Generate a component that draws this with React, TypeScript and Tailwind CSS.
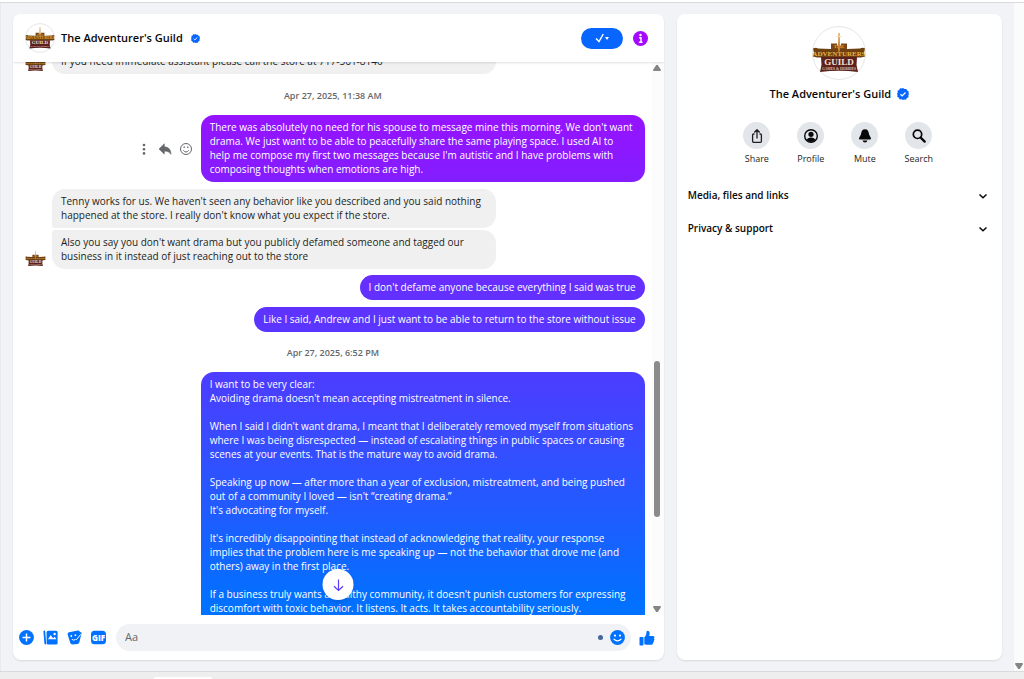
import type { ReactNode } from 'react';
import clsx from 'clsx';

function GuildLogo({ className }: { className?: string }) {
  return (
    <svg
      viewBox="0 0 54 54"
      className={clsx('shrink-0 overflow-visible', className)}
      role="img"
      aria-label="The Adventurer's Guild"
    >
      <path d="M19 17.500h6v2h4v-2h6v5.500H19z" fill="#7a4716" />
      <path d="M1 22.500q3-1.500 5 0l13 .5h16l13-.5q3-1.500 5 0l-1 4.500 1 3.500-4 1H5l-4-1L2 27z" fill="#6e4012" />
      <path d="M9 31h36l-.5 8 1.500 7q-19-2.500-38 0l1.500-7z" fill="#5c211c" />
      <g fontFamily="'Liberation Serif', serif" fontWeight="700" textAnchor="middle">
        <text x="27" y="22" fontSize="5" fill="#e0a235">THE</text>
        <text x="27" y="29.500" fontSize="7" fill="#e8b040">ADVENTURERS</text>
        <text x="27" y="38.500" fontSize="9" fill="#f2e4da">GUILD</text>
        <text x="27" y="43.500" fontSize="3.600" fill="#d8c0b0">GAMES &amp; HOBBIES</text>
      </g>
      <path d="M26.500 7h1l.6 16-1.100 5-1.100-5z" fill="#c98a35" />
      <path d="M24.500 10.500h5" stroke="#f3dcae" strokeWidth="1" />
    </svg>
  );
}

function Verified({ className }: { className?: string }) {
  return (
    <svg viewBox="0 0 24 24" className={className} role="img" aria-label="Verified">
      <path
        d="M12 0l3 2.200 3.700-.4 1.500 3.400 3.300 1.700-.4 3.700L24 12l-1.400 2.900.4 3.700-3.300 1.500-1.700 3.300-3.700-.4L12 24l-2.900-1.400-3.700.4-1.500-3.300L.6 18l.4-3.700L0 12l1.400-2.900L1 5.400l3.300-1.500L6 .6l3.700.4z"
        fill="#0866ff"
      />
      <path d="M7 12.500l3.300 3.200L17 9" fill="none" stroke="#fff" strokeWidth="2.400" />
    </svg>
  );
}

function Timestamp({ children }: { children: ReactNode }) {
  return <div className="pr-1 text-center text-[9px] font-semibold leading-3 text-[#65676b]">{children}</div>;
}

const bubble = 'max-w-[444px] whitespace-pre-line pt-[5px] pb-[6px] text-[10px] leading-[14px]';

function Sent({ children, className = 'rounded-[13px]' }: { children: ReactNode; className?: string }) {
  return (
    <div
      className={clsx(
        bubble,
        'bg-[linear-gradient(#a50aff_62px,#4840ff_390px,#0072ff_610px)] bg-fixed px-[9px] text-white',
        className
      )}
    >
      {children}
    </div>
  );
}

function Received({ children, className, avatar }: { children: ReactNode; className?: string; avatar?: boolean }) {
  return (
    <div className="flex items-end">
      <div className="w-[27px] shrink-0">{avatar && <GuildLogo className="size-[21px]" />}</div>
      <div className={clsx(bubble, 'bg-[#f0f0f0] px-[9px] text-[#1c1e21]', className)}>{children}</div>
    </div>
  );
}

function Arrow({ down }: { down?: boolean }) {
  return (
    <svg viewBox="0 0 8 6" className="h-[6px] w-2 shrink-0 text-[#858585]" aria-hidden="true">
      <path d={down ? 'M.5 0h7L8 1 4.800 6H3.200L0 1z' : 'M3.200 0h1.600L8 5l-.5 1h-7L0 5z'} fill="currentColor" />
    </svg>
  );
}

function IconButton({ label, children, className }: { label: string; children: ReactNode; className?: string }) {
  return (
    <button type="button" aria-label={label} className={clsx('flex shrink-0 items-center justify-center', className)}>
      {children}
    </button>
  );
}

function MessageTools() {
  return (
    <div className="mr-2 flex items-center gap-[7px] text-[#65676b]">
      <IconButton label="More">
        <svg viewBox="0 0 14 14" className="size-[14px]" fill="currentColor">
          <circle cx="7" cy="3" r="1.300" />
          <circle cx="7" cy="7.200" r="1.300" />
          <circle cx="7" cy="11.400" r="1.300" />
        </svg>
      </IconButton>
      <IconButton label="Reply">
        <svg viewBox="0 0 14 14" className="size-[14px]" fill="currentColor">
          <path d="M6.300 1.800v3C10 5 12.800 7 13 12.300c-1.500-2.200-3.500-3.200-6.700-3.200v3L1 7z" strokeLinejoin="round" stroke="currentColor" strokeWidth=".6" />
        </svg>
      </IconButton>
      <IconButton label="React">
        <svg viewBox="0 0 14 14" className="size-[14px]" fill="none" stroke="currentColor">
          <circle cx="7" cy="7" r="5.500" />
          <path d="M4.300 8.300q2.700 3.400 5.400 0" />
          <path d="M5.200 4.600v1.400M8.800 4.600v1.400" strokeWidth="1.300" />
        </svg>
      </IconButton>
    </div>
  );
}

function ChatHeader() {
  return (
    <header className="z-10 flex h-12 shrink-0 items-center bg-white pl-3 pr-4 shadow-[0_1px_2px_rgba(0,0,0,0.12)]">
      <span className="flex size-[30px] items-center justify-center rounded-full border border-[#e6e6e6]">
        <GuildLogo className="size-[30px]" />
      </span>
      <h1 className="ml-[6px] pt-px text-[11px] font-semibold text-[#080809]">The Adventurer's Guild</h1>
      <Verified className="ml-2 mt-px size-[9px]" />
      <button
        type="button"
        aria-label="Mark as done"
        className="ml-auto flex h-[21px] w-[42px] items-center justify-center rounded-full bg-[#0866ff]"
      >
        <svg viewBox="0 0 16 12" className="h-3 w-4" fill="none" stroke="#fff">
          <path d="M2 6.500l3 3L9.300 2" strokeWidth="1.400" />
          <path d="M11 5h4l-2 3z" fill="#fff" stroke="none" />
        </svg>
      </button>
      <IconButton label="Conversation information" className="ml-[10px]">
        <svg viewBox="0 0 16 16" className="size-[15px]">
          <circle cx="8" cy="8" r="8" fill="#a50aff" />
          <circle cx="8" cy="4.300" r="1.300" fill="#fff" />
          <path d="M6.500 7.200h2v4.600M6.300 12h3.800" fill="none" stroke="#fff" strokeWidth="1.500" />
        </svg>
      </IconButton>
    </header>
  );
}

const statement = `I want to be very clear:
Avoiding drama doesn't mean accepting mistreatment in silence.

When I said I didn't want drama, I meant that I deliberately removed myself from situations where I was being disrespected — instead of escalating things in public spaces or causing scenes at your events. That is the mature way to avoid drama.

Speaking up now — after more than a year of exclusion, mistreatment, and being pushed out of a community I loved — isn't “creating drama.”
It's advocating for myself.

It's incredibly disappointing that instead of acknowledging that reality, your response implies that the problem here is me speaking up — not the behavior that drove me (and others) away in the first place.

If a business truly wants a healthy community, it doesn't punish customers for expressing discomfort with toxic behavior. It listens. It acts. It takes accountability seriously.`;

function Messages() {
  return (
    <div className="relative flex min-h-0 flex-1">
      <div className="min-w-0 flex-1 overflow-hidden pl-3 pr-[7px]">
        <div className="-mt-[13px]">
          <Received avatar className="w-[444px] rounded-[13px] rounded-tl-[3px]">
            If you need immediate assistant please call the store at 717-561-8140
          </Received>
        </div>
        <div className="mt-4">
          <Timestamp>Apr 27, 2025, 11:38 AM</Timestamp>
        </div>
        <div className="mt-[13px] flex items-center justify-end">
          <MessageTools />
          <Sent>
            There was absolutely no need for his spouse to message mine this morning. We don't want drama. We just want
            to be able to peacefully share the same playing space. I used AI to help me compose my first two messages
            because I'm autistic and I have problems with composing thoughts when emotions are high.
          </Sent>
        </div>
        <div className="mt-[7px] flex flex-col gap-[2px]">
          <Received className="rounded-[13px] rounded-bl-[3px]">
            Tenny works for us. We haven't seen any behavior like you described and you said nothing happened at the
            store. I really don't know what you expect if the store.
          </Received>
          <Received avatar className="rounded-[13px] rounded-tl-[3px]">
            Also you say you don't want drama but you publicly defamed someone and tagged our business in it instead of
            just reaching out to the store
          </Received>
        </div>
        <div className="mt-[6px] flex flex-col items-end gap-[7px]">
          <Sent>I don't defame anyone because everything I said was true</Sent>
          <Sent>Like I said, Andrew and I just want to be able to return to the store without issue</Sent>
        </div>
        <div className="mt-[15px]">
          <Timestamp>Apr 27, 2025, 6:52 PM</Timestamp>
        </div>
        <div className="mt-[13px] flex justify-end">
          <Sent className="rounded-t-[13px]">{statement}</Sent>
        </div>
      </div>
      <div className="flex w-3 shrink-0 flex-col items-center bg-[#fcfcfc] py-[3px] pr-[2px]">
        <Arrow />
        <div className="flex-[288]" />
        <div className="w-[6px] flex-[155] rounded-full bg-[#8b8b8b]" />
        <div className="flex-[88]" />
        <Arrow down />
      </div>
      <button
        type="button"
        aria-label="Scroll to bottom"
        className="absolute bottom-[15px] left-1/2 flex size-[31px] -translate-x-1/2 items-center justify-center rounded-full bg-white shadow-md"
      >
        <svg viewBox="0 0 14 14" className="size-[14px]" fill="none" stroke="#5a3cff" strokeWidth="1.200">
          <path d="M7 1.500v11M2.500 8.200L7 12.500l4.500-4.300" />
        </svg>
      </button>
    </div>
  );
}

function Composer() {
  return (
    <form className="flex h-[45px] shrink-0 items-center pl-[6px] pr-[9px]">
      <div className="flex items-center gap-[9px] text-[#0072ff]">
        <IconButton label="More actions">
          <svg viewBox="0 0 15 15" className="size-[15px]">
            <circle cx="7.500" cy="7.500" r="7.400" fill="currentColor" />
            <path d="M7.500 3.500v8M3.500 7.500h8" stroke="#fff" strokeWidth="1.500" />
          </svg>
        </IconButton>
        <IconButton label="Attach a photo">
          <svg viewBox="0 0 15 15" className="size-[15px]">
            <path d="M1.300 1.500L2.300 13.500" stroke="currentColor" strokeWidth="1.800" strokeLinecap="round" />
            <rect x="3.600" y=".8" width="11" height="13.600" rx="1.500" fill="currentColor" />
            <path d="M5 9.300l2.700-4.300 2.300 3.200 1.700-1.500 1.800 2.600z" fill="#fff" />
            <circle cx="11.600" cy="4" r="1.200" fill="#fff" />
          </svg>
        </IconButton>
        <IconButton label="Choose a sticker">
          <svg viewBox="0 0 15 15" className="size-[15px]">
            <path d="M2 2.200l9-1.600q1.400-.2 1.700 1.200l2 1-2.400 9.700q-.4 1.300-1.700 1.500l-5.300.4q-1.400 0-2-1.400L.6 4.200q-.2-1.700 1.400-2z" fill="currentColor" />
            <path d="M4.800 9.300q1.700 1.600 3.800.2M9.300 9.800l4.600-5.600" fill="none" stroke="#fff" strokeWidth="1" />
            <circle cx="4.300" cy="6" r=".9" fill="#fff" />
            <circle cx="8.400" cy="5.200" r=".9" fill="#fff" />
          </svg>
        </IconButton>
        <IconButton label="Choose a GIF">
          <svg viewBox="0 0 15 15" className="size-[15px]">
            <rect y=".7" width="15" height="13.600" rx="3.600" fill="currentColor" />
            <text x="7.500" y="10.500" textAnchor="middle" fontSize="8" fontWeight="800" fill="#fff" fontFamily="'Open Sans', sans-serif">
              GIF
            </text>
          </svg>
        </IconButton>
      </div>
      <div className="ml-[10px] flex h-[27px] min-w-0 flex-1 items-center rounded-full bg-[#f0f2f5] pl-[9px] pr-[6px]">
        <input
          type="text"
          aria-label="Message"
          placeholder="Aa"
          className="min-w-0 flex-1 bg-transparent text-[11px] outline-none placeholder:text-[#65676b]"
        />
        <span className="size-[5px] rounded-full bg-[#44679c]" />
        <IconButton label="Choose an emoji" className="ml-[7px] text-[#0072ff]">
          <svg viewBox="0 0 15 15" className="size-[15px]">
            <circle cx="7.500" cy="7.500" r="7.400" fill="currentColor" />
            <circle cx="5" cy="5.600" r="1.100" fill="#fff" />
            <circle cx="10" cy="5.600" r="1.100" fill="#fff" />
            <path d="M3.600 8.800q3.900 4 7.800 0" fill="none" stroke="#fff" strokeWidth="1.200" />
          </svg>
        </IconButton>
      </div>
      <IconButton label="Send a like" className="ml-2 text-[#0072ff]">
        <svg viewBox="0 0 16 16" className="size-4" fill="currentColor">
          <rect x=".5" y="7" width="4" height="8.500" rx=".8" />
          <path d="M5.300 7.300C7.500 6 7.200 3.500 7.600 1.600 8 .3 10.500.6 10.600 3c.1 1.300-.2 2-.4 3h3.600c2 0 2 2 1.100 2.400.9.700.6 2-.2 2.300.5.900 0 1.900-.7 2.100.1 1.200-.5 2-1.700 2H9c-1.500 0-2.500-.3-3.700-.9z" />
        </svg>
      </IconButton>
    </form>
  );
}

const actions = [
  {
    label: 'Share',
    icon: (
      <svg viewBox="0 0 16 16" className="size-4" fill="none" stroke="#1c1e21" strokeWidth="1.300" strokeLinejoin="round">
        <path d="M5.500 6H4.600q-1 0-1 1v6.300q0 1 1 1h6.800q1 0 1-1V7q0-1-1-1h-.9M8 10.500V2M5.300 4.500L8 1.700l2.700 2.800" />
      </svg>
    )
  },
  {
    label: 'Profile',
    icon: (
      <svg viewBox="0 0 16 16" className="size-4">
        <circle cx="8" cy="8" r="6.300" fill="none" stroke="#080809" strokeWidth="1.400" />
        <circle cx="8" cy="6.300" r="2.600" fill="#080809" />
        <path d="M3.500 12q1-2.500 4.500-2.500t4.500 2.500q-4.500 4-9 0z" fill="#080809" />
      </svg>
    )
  },
  {
    label: 'Mute',
    icon: (
      <svg viewBox="0 0 16 16" className="size-4" fill="#080809">
        <path d="M8 1.200c2.600 0 3.600 1.800 3.800 4 .2 2.300 2.200 4 2.200 5.300 0 .7-.5 1-1.200 1H3.200c-.7 0-1.200-.3-1.200-1 0-1.300 2-3 2.200-5.300.2-2.200 1.200-4 3.800-4z" />
        <path d="M5.500 12.500h5q-.5 2-2.500 2t-2.500-2z" />
      </svg>
    )
  },
  {
    label: 'Search',
    icon: (
      <svg viewBox="0 0 16 16" className="size-4" fill="none" stroke="#080809">
        <circle cx="6.500" cy="6.300" r="4.200" strokeWidth="1.700" />
        <path d="M9.700 9.600l4 4" strokeWidth="2.300" strokeLinecap="round" />
      </svg>
    )
  }
];

function Section({ title }: { title: string }) {
  return (
    <button type="button" className="flex h-[33px] w-full items-center justify-between text-[10px] font-semibold text-[#080809]">
      {title}
      <svg viewBox="0 0 10 10" className="size-[10px]" fill="none" stroke="currentColor" strokeWidth="1.500">
        <path d="M1.500 3.500L5 6.800l3.500-3.300" />
      </svg>
    </button>
  );
}

function InfoPanel() {
  return (
    <aside className="flex min-w-0 flex-1 flex-col items-center rounded-lg bg-white pt-3 shadow-[0_1px_2px_rgba(0,0,0,0.1)]">
      <span className="flex size-[54px] items-center justify-center rounded-full border border-[#e6e6e6]">
        <GuildLogo className="size-[54px]" />
      </span>
      <h2 className="mt-[5px] flex items-center gap-[6px] text-[11px] font-semibold leading-[18px] text-[#080809]">
        The Adventurer's Guild
        <Verified className="size-3" />
      </h2>
      <div className="mt-[19px] flex pr-[3px]">
        {actions.map(({ label, icon }) => (
          <button key={label} type="button" className="flex w-[54px] flex-col items-center text-[9px] leading-3 text-[#1c1e21]">
            <span className="mb-1 flex size-[27px] items-center justify-center rounded-full bg-[#e2e5e9]">{icon}</span>
            {label}
          </button>
        ))}
      </div>
      <div className="mt-[14px] w-full pl-[11px] pr-[14px]">
        <Section title="Media, files and links" />
        <Section title="Privacy & support" />
      </div>
    </aside>
  );
}

export default function App() {
  return (
    <div className="flex h-screen flex-col bg-[#eeeeee] font-['Open_Sans','Noto_Sans',sans-serif]">
      <div className="h-[2px] shrink-0 bg-white" />
      <div className="flex min-h-0 flex-1 border-b border-t border-[#d8dade] bg-[#f2f3f7]">
        <main className="flex min-w-0 flex-1 gap-[13px] border-l border-[#e8e9ed] pb-[11px] pl-3 pr-3 pt-[11px]">
          <section className="flex min-w-0 flex-[2] flex-col overflow-hidden rounded-lg bg-white shadow-[0_1px_2px_rgba(0,0,0,0.1)]">
            <ChatHeader />
            <Messages />
            <Composer />
          </section>
          <InfoPanel />
        </main>
        <div className="flex w-[10px] shrink-0 flex-col items-center justify-end bg-[#fbfbfc] pb-[2px]">
          <Arrow down />
        </div>
      </div>
      <div className="flex h-[7px] shrink-0 items-end pl-[154px]">
        <div className="h-[2px] w-[58px] rounded-t-full bg-white" />
      </div>
    </div>
  );
}
